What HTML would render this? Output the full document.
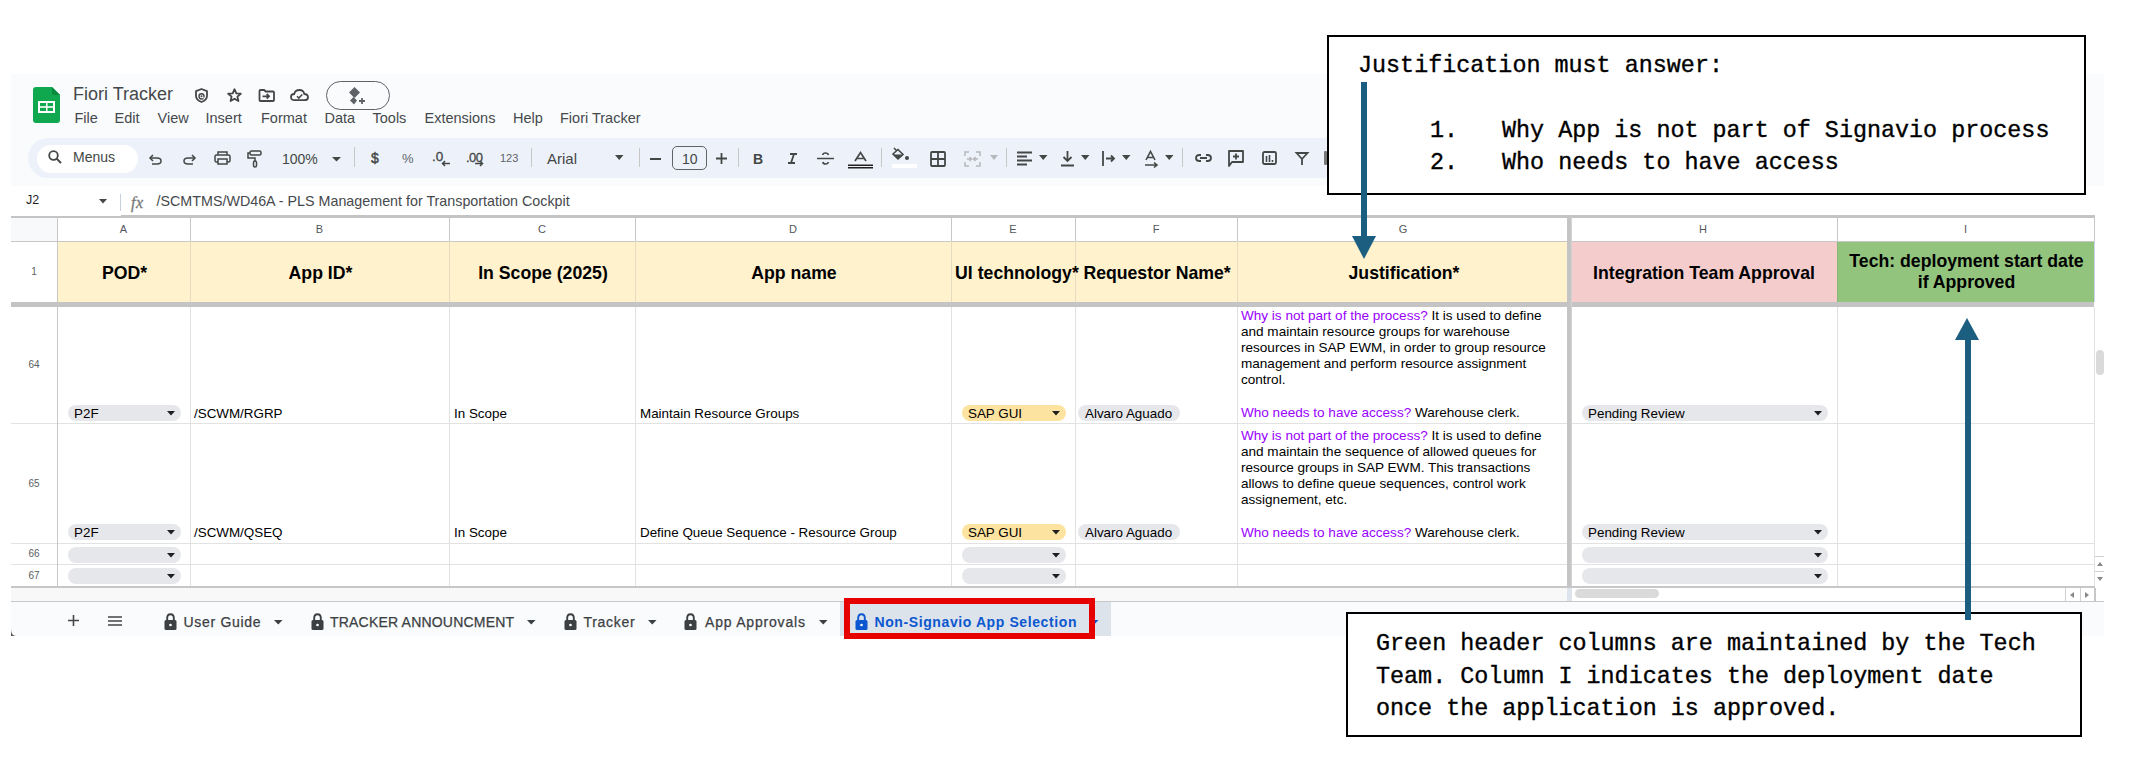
<!DOCTYPE html><html><head><meta charset="utf-8"><style>
*{margin:0;padding:0;box-sizing:border-box}
html,body{width:2143px;height:778px;overflow:hidden;background:#fff;font-family:"Liberation Sans",sans-serif;color:#1f1f1f}
.a{position:absolute}
.t{position:absolute;white-space:nowrap;line-height:1}
.mono{position:absolute;white-space:pre;font-family:"Liberation Mono",monospace;color:#000;line-height:1;-webkit-text-stroke:0.35px #000}
svg{position:absolute;overflow:visible}
</style></head><body>
<div class="a" style="left:11px;top:74px;width:2093px;height:112px;background:#f9fbfd;"></div>
<svg style="left:33px;top:87px" width="27" height="36" viewBox="0 0 27 36"><path d="M0 3Q0 0 3 0H19L27 8V33Q27 36 24 36H3Q0 36 0 33Z" fill="#0fa84e"/><path d="M19 0L27 8H21Q19 8 19 6Z" fill="#078a3e"/><rect x="5" y="14" width="17" height="12" fill="#fff"/><rect x="7" y="16" width="6" height="3.2" fill="#0fa84e"/><rect x="14.5" y="16" width="5.5" height="3.2" fill="#0fa84e"/><rect x="7" y="20.8" width="6" height="3.2" fill="#0fa84e"/><rect x="14.5" y="20.8" width="5.5" height="3.2" fill="#0fa84e"/></svg>
<div class="t" style="left:73px;top:84.7px;font-size:18px;color:#45484b;">Fiori Tracker</div>
<svg style="left:195px;top:88px" width="13" height="15" viewBox="0 0 13 15"><path d="M6.5 1L12 3.2V8Q12 12 6.5 14Q1 12 1 8V3.2Z" fill="none" stroke="#444746" stroke-width="1.8" stroke-linejoin="round"/><path d="M8.6 10.5Q8 11 6.5 11Q4 11 4 8.3Q4 5.8 6.5 5.8Q9 5.8 9 8.3V9.5" fill="none" stroke="#444746" stroke-width="1.4"/><circle cx="6.5" cy="8.3" r="1" fill="#444746"/></svg>
<svg style="left:227px;top:88px" width="15" height="14" viewBox="0 0 15 14"><path d="M7.5 1.2L9.3 5.3L13.8 5.7L10.4 8.6L11.4 13L7.5 10.7L3.6 13L4.6 8.6L1.2 5.7L5.7 5.3Z" fill="none" stroke="#444746" stroke-width="1.8" stroke-linejoin="round"/></svg>
<svg style="left:258px;top:89px" width="17" height="13" viewBox="0 0 17 13"><path d="M1.5 2Q1.5 1 2.5 1H6.2L7.7 2.5H15Q16 2.5 16 3.5V11Q16 12 15 12H2.5Q1.5 12 1.5 11Z" fill="none" stroke="#444746" stroke-width="1.8" stroke-linejoin="round"/><path d="M4.5 7.3H11M8.7 5L11 7.3L8.7 9.6" fill="none" stroke="#444746" stroke-width="1.8"/></svg>
<svg style="left:290px;top:89px" width="19" height="12" viewBox="0 0 19 12"><path d="M4.5 11.2Q1 11.2 1 8Q1 5 4.2 5Q5 1 9.5 1Q13.5 1 14.3 5Q18 5.2 18 8.2Q18 11.2 14.5 11.2Z" fill="none" stroke="#444746" stroke-width="1.8"/><path d="M7 7.2L8.8 9L12.3 5.5" fill="none" stroke="#444746" stroke-width="1.6"/></svg>
<div class="a" style="left:326px;top:81px;width:64px;height:29px;background:transparent;border:1.6px solid #5f6368;border-radius:15px"></div>
<svg style="left:349px;top:87px" width="18" height="18" viewBox="0 0 18 18"><path d="M5.5 0L11 5.5L5.5 11L0 5.5Z" fill="#5f6368"/><path d="M4.5 10L8 13.5L5 17.5L1 13.5Z" fill="#5f6368"/><path d="M13 11V17M10 14H16" stroke="#5f6368" stroke-width="1.8"/></svg>
<div class="t" style="left:74.5px;top:111px;font-size:14.5px;color:#46494c;">File</div>
<div class="t" style="left:114.5px;top:111px;font-size:14.5px;color:#46494c;">Edit</div>
<div class="t" style="left:157.5px;top:111px;font-size:14.5px;color:#46494c;">View</div>
<div class="t" style="left:205.5px;top:111px;font-size:14.5px;color:#46494c;">Insert</div>
<div class="t" style="left:261px;top:111px;font-size:14.5px;color:#46494c;">Format</div>
<div class="t" style="left:324.5px;top:111px;font-size:14.5px;color:#46494c;">Data</div>
<div class="t" style="left:372.5px;top:111px;font-size:14.5px;color:#46494c;">Tools</div>
<div class="t" style="left:424.5px;top:111px;font-size:14.5px;color:#46494c;">Extensions</div>
<div class="t" style="left:513px;top:111px;font-size:14.5px;color:#46494c;">Help</div>
<div class="t" style="left:560px;top:111px;font-size:14.5px;color:#46494c;">Fiori Tracker</div>
<div class="a" style="left:28px;top:138px;width:1400px;height:40px;background:#edf2fa;border-radius:20px"></div>
<div class="a" style="left:37px;top:145px;width:101px;height:28px;background:#fff;border-radius:14px"></div>
<svg style="left:48px;top:150px" width="14" height="15" viewBox="0 0 14 15"><circle cx="5.5" cy="5.5" r="4.3" fill="none" stroke="#444746" stroke-width="1.8"/><path d="M8.6 8.6L13 13" stroke="#444746" stroke-width="2"/></svg>
<div class="t" style="left:73px;top:150px;font-size:14px;color:#444746;">Menus</div>
<svg style="left:149px;top:154px" width="13" height="11" viewBox="0 0 13 11"><path d="M4 1L1 4L4 7" fill="none" stroke="#444746" stroke-width="1.5"/><path d="M1.5 4H8Q12 4 12 7Q12 10 8 10H3" fill="none" stroke="#444746" stroke-width="1.5"/></svg>
<svg style="left:183px;top:154px" width="13" height="11" viewBox="0 0 13 11"><path d="M9 1L12 4L9 7" fill="none" stroke="#444746" stroke-width="1.5"/><path d="M11.5 4H5Q1 4 1 7Q1 10 5 10H10" fill="none" stroke="#444746" stroke-width="1.5"/></svg>
<svg style="left:214px;top:151px" width="17" height="14" viewBox="0 0 17 14"><path d="M4 4V1H13V4" fill="none" stroke="#444746" stroke-width="1.5"/><rect x="1" y="4" width="15" height="7" rx="1.5" fill="none" stroke="#444746" stroke-width="1.5"/><rect x="4" y="8" width="9" height="5" fill="#edf2fa" stroke="#444746" stroke-width="1.5"/></svg>
<svg style="left:247px;top:150px" width="15" height="18" viewBox="0 0 15 18"><rect x="3" y="1" width="11" height="4" rx="1.5" fill="none" stroke="#444746" stroke-width="1.5"/><path d="M3 3H1V8H8V11" fill="none" stroke="#444746" stroke-width="1.5"/><rect x="6.5" y="11" width="3" height="6" rx="1.5" fill="none" stroke="#444746" stroke-width="1.5"/></svg>
<div class="t" style="left:282px;top:151.5px;font-size:14px;color:#444746;">100%</div>
<svg style="left:332px;top:157px" width="9" height="4.5" viewBox="0 0 9 4.5"><path d="M0 0H9L4.5 4.5Z" fill="#444746"/></svg>
<div class="a" style="left:354px;top:147px;width:1px;height:20px;background:#c7c7c7;"></div>
<div class="t" style="left:371px;top:150.5px;font-size:14px;color:#444746;-webkit-text-stroke:0.4px #444746">$</div>
<div class="t" style="left:402px;top:151.5px;font-size:13px;color:#5f6368;">%</div>
<div class="t" style="left:432px;top:150px;font-size:13.5px;color:#444746;-webkit-text-stroke:0.3px #444746">.0</div>
<svg style="left:441px;top:161px" width="9" height="5" viewBox="0 0 9 5"><path d="M9 2.5H2M4 0L1.5 2.5L4 5" fill="none" stroke="#444746" stroke-width="1.5"/></svg>
<div class="t" style="left:466px;top:150.5px;font-size:13px;color:#444746;-webkit-text-stroke:0.3px #444746;letter-spacing:-0.6px">.00</div>
<svg style="left:475px;top:161px" width="9" height="5" viewBox="0 0 9 5"><path d="M0 2.5H7M5 0L7.5 2.5L5 5" fill="none" stroke="#444746" stroke-width="1.5"/></svg>
<div class="t" style="left:500px;top:153px;font-size:11px;color:#5f6368;">123</div>
<div class="a" style="left:531px;top:148px;width:1px;height:19px;background:#c7c7c7;"></div>
<div class="t" style="left:547px;top:151px;font-size:15px;color:#444746;">Arial</div>
<svg style="left:615px;top:155px" width="8.5" height="5" viewBox="0 0 8.5 5"><path d="M0 0H8.5L4.25 5Z" fill="#444746"/></svg>
<div class="a" style="left:639px;top:148px;width:1px;height:19px;background:#c7c7c7;"></div>
<div class="a" style="left:650px;top:158px;width:11px;height:2px;background:#444746;"></div>
<div class="a" style="left:672px;top:146px;width:35px;height:24px;background:transparent;border:1.5px solid #5f6368;border-radius:5px"></div>
<div class="t" style="left:682px;top:151.5px;font-size:14px;color:#444746;">10</div>
<svg style="left:716px;top:153px" width="11" height="11" viewBox="0 0 11 11"><path d="M5.5 0V11M0 5.5H11" stroke="#444746" stroke-width="1.8"/></svg>
<div class="a" style="left:738px;top:148px;width:1px;height:19px;background:#c7c7c7;"></div>
<div class="t" style="left:753px;top:151.5px;font-size:14px;color:#444746;font-weight:bold">B</div>
<svg style="left:787px;top:153px" width="11" height="11" viewBox="0 0 11 11"><path d="M3 1H10M1 10H8M7 1L4 10" stroke="#444746" stroke-width="1.8" fill="none"/></svg>
<svg style="left:817px;top:152px" width="17" height="13" viewBox="0 0 17 13"><path d="M0 6.5H17" stroke="#444746" stroke-width="1.5"/><path d="M11.5 3Q11 1 8.5 1Q6 1 5.8 3M5.8 10Q6.2 12 8.5 12Q11 12 11.3 10" fill="none" stroke="#444746" stroke-width="1.6"/></svg>
<svg style="left:848px;top:152px" width="25" height="17" viewBox="0 0 25 17"><path d="M7 9L12.5 0.5L18 9M8.7 6.5H16.3" fill="none" stroke="#444746" stroke-width="1.7"/><rect x="0" y="12.5" width="25" height="4" fill="#1f1f1f"/><rect x="0" y="14" width="25" height="1" fill="#edf2fa"/></svg>
<div class="a" style="left:881px;top:148px;width:1px;height:19px;background:#c7c7c7;"></div>
<svg style="left:891px;top:147px" width="19" height="14" viewBox="0 0 19 14"><path d="M3 1L6 4M2 7L7 2.5L12 7.5L7 12L2 7Z" fill="none" stroke="#444746" stroke-width="1.6"/><path d="M2 7.5H12L7 12Z" fill="#444746"/><circle cx="16" cy="11" r="2" fill="#444746"/></svg>
<div class="a" style="left:892px;top:164px;width:25px;height:4px;background:#fff;"></div>
<svg style="left:930px;top:151px" width="16" height="16" viewBox="0 0 16 16"><rect x="1" y="1" width="14" height="14" rx="1" fill="none" stroke="#444746" stroke-width="1.8"/><path d="M8 1V15M1 8H15" stroke="#444746" stroke-width="1.8"/></svg>
<svg style="left:964px;top:151px" width="17" height="16" viewBox="0 0 17 16"><path d="M1 5V1H5M1 11V15H5M16 5V1H12M16 11V15H12M3 8H7M5.5 6L7.5 8L5.5 10M14 8H10M11.5 6L9.5 8L11.5 10" fill="none" stroke="#b6b8bb" stroke-width="1.5"/></svg>
<svg style="left:990px;top:155px" width="8" height="5" viewBox="0 0 8 5"><path d="M0 0H8L4.0 5Z" fill="#b6b8bb"/></svg>
<div class="a" style="left:1006px;top:148px;width:1px;height:19px;background:#c7c7c7;"></div>
<svg style="left:1017px;top:151px" width="15" height="15" viewBox="0 0 15 15"><path d="M0 1.5H15M0 5.5H10M0 9.5H15M0 13.5H10" stroke="#444746" stroke-width="2"/></svg>
<svg style="left:1039px;top:155px" width="8.5" height="5" viewBox="0 0 8.5 5"><path d="M0 0H8.5L4.25 5Z" fill="#444746"/></svg>
<svg style="left:1061px;top:151px" width="13" height="16" viewBox="0 0 13 16"><path d="M6.5 0V10M2.5 6L6.5 10L10.5 6M0 14.5H13" fill="none" stroke="#444746" stroke-width="1.8"/></svg>
<svg style="left:1081px;top:155px" width="8.5" height="5" viewBox="0 0 8.5 5"><path d="M0 0H8.5L4.25 5Z" fill="#444746"/></svg>
<svg style="left:1102px;top:151px" width="13" height="15" viewBox="0 0 13 15"><path d="M1 0V15M4 7.5H12M9 4.5L12 7.5L9 10.5" fill="none" stroke="#444746" stroke-width="1.8"/></svg>
<svg style="left:1122px;top:155px" width="8.5" height="5" viewBox="0 0 8.5 5"><path d="M0 0H8.5L4.25 5Z" fill="#444746"/></svg>
<svg style="left:1145px;top:151px" width="13" height="16" viewBox="0 0 13 16"><path d="M1 9L5.5 0.5L10 9M2.5 6.5H8.5M0 14H11M9 11.5L12 14L9 16.5" fill="none" stroke="#444746" stroke-width="1.6"/></svg>
<svg style="left:1165px;top:155px" width="8.5" height="5" viewBox="0 0 8.5 5"><path d="M0 0H8.5L4.25 5Z" fill="#444746"/></svg>
<div class="a" style="left:1182px;top:148px;width:1px;height:19px;background:#c7c7c7;"></div>
<svg style="left:1195px;top:154px" width="17" height="8" viewBox="0 0 17 8"><path d="M6 1H4.5Q1 1 1 4Q1 7 4.5 7H6M11 1H12.5Q16 1 16 4Q16 7 12.5 7H11M5 4H12" fill="none" stroke="#444746" stroke-width="1.8"/></svg>
<svg style="left:1228px;top:150px" width="16" height="17" viewBox="0 0 16 17"><path d="M1 1H15V12H4L1 16Z" fill="none" stroke="#444746" stroke-width="1.8" stroke-linejoin="round"/><path d="M8 3.5V9.5M5 6.5H11" stroke="#444746" stroke-width="1.8"/></svg>
<svg style="left:1262px;top:151px" width="15" height="14" viewBox="0 0 15 14"><rect x="1" y="1" width="13" height="12" rx="1.5" fill="none" stroke="#444746" stroke-width="1.8"/><path d="M4.5 5V11M7.5 4V11M10.5 9V11" stroke="#444746" stroke-width="1.6"/></svg>
<svg style="left:1296px;top:152px" width="12" height="13" viewBox="0 0 12 13"><path d="M0.5 1H11.5L6 7L0.5 1ZM6 7V13" fill="none" stroke="#444746" stroke-width="1.8"/></svg>
<div class="a" style="left:1324px;top:151px;width:3px;height:14px;background:#777;border-radius:1px"></div>
<div class="a" style="left:11px;top:186px;width:2093px;height:31px;background:#fff;"></div>
<div class="t" style="left:26px;top:193.5px;font-size:12.5px;color:#1f1f1f;">J2</div>
<svg style="left:99px;top:199px" width="8" height="4.5" viewBox="0 0 8 4.5"><path d="M0 0H8L4.0 4.5Z" fill="#444746"/></svg>
<div class="a" style="left:120px;top:194px;width:1px;height:17px;background:#c7d0dc;"></div>
<div class="t" style="left:131px;top:194.5px;font-size:16px;color:#777;font-family:'Liberation Serif',serif;-webkit-text-stroke:0.3px #777;letter-spacing:0.5px"><i>fx</i></div>
<div class="t" style="left:156.5px;top:193.5px;font-size:14.3px;color:#46494c;">/SCMTMS/WD46A - PLS Management for Transportation Cockpit</div>
<div class="a" style="left:11px;top:217px;width:2093px;height:24px;background:#fff;"></div>
<div class="a" style="left:11px;top:217px;width:46px;height:24px;background:#f8f9fa;"></div>
<div class="a" style="left:58px;top:241px;width:132px;height:61px;background:#fff2cc;"></div>
<div class="a" style="left:191px;top:241px;width:258px;height:61px;background:#fff2cc;"></div>
<div class="a" style="left:450px;top:241px;width:185px;height:61px;background:#fff2cc;"></div>
<div class="a" style="left:636px;top:241px;width:315px;height:61px;background:#fff2cc;"></div>
<div class="a" style="left:952px;top:241px;width:123px;height:61px;background:#fff2cc;"></div>
<div class="a" style="left:1076px;top:241px;width:161px;height:61px;background:#fff2cc;"></div>
<div class="a" style="left:1238px;top:241px;width:331px;height:61px;background:#fff2cc;"></div>
<div class="a" style="left:1570px;top:241px;width:267px;height:61px;background:#f4cccc;"></div>
<div class="a" style="left:1838px;top:241px;width:256px;height:61px;background:#93c47d;"></div>
<div class="a" style="left:11px;top:241px;width:46px;height:61px;background:#fff;"></div>
<div class="a" style="left:11px;top:307px;width:2093px;height:280px;background:#fff;"></div>
<div class="a" style="left:11px;top:215px;width:2084px;height:3px;background:#c4c4c4;"></div>
<div class="a" style="left:11px;top:215px;width:110px;height:1px;background:#fff;"></div>
<div class="a" style="left:11px;top:241px;width:2083px;height:1px;background:#c7c7c7;"></div>
<div class="a" style="left:190px;top:241px;width:1px;height:61px;background:#e6dcc0;"></div>
<div class="a" style="left:449px;top:241px;width:1px;height:61px;background:#e6dcc0;"></div>
<div class="a" style="left:635px;top:241px;width:1px;height:61px;background:#e6dcc0;"></div>
<div class="a" style="left:951px;top:241px;width:1px;height:61px;background:#e6dcc0;"></div>
<div class="a" style="left:1075px;top:241px;width:1px;height:61px;background:#e6dcc0;"></div>
<div class="a" style="left:1237px;top:241px;width:1px;height:61px;background:#e6dcc0;"></div>
<div class="a" style="left:1837px;top:242px;width:257px;height:60px;background:#93c47d;"></div>
<div class="a" style="left:1837px;top:242px;width:1px;height:60px;background:#88b872;"></div>
<div class="a" style="left:2094px;top:217px;width:1px;height:85px;background:#c9d6ea;"></div>
<div class="a" style="left:11px;top:302px;width:2083px;height:5px;background:#c4c4c4;"></div>
<div class="a" style="left:11px;top:423px;width:2083px;height:1px;background:#e2e2e2;"></div>
<div class="a" style="left:11px;top:543px;width:2083px;height:1px;background:#e2e2e2;"></div>
<div class="a" style="left:11px;top:564px;width:2083px;height:1px;background:#e2e2e2;"></div>
<div class="a" style="left:11px;top:587px;width:2083px;height:1px;background:#e2e2e2;"></div>
<div class="a" style="left:57px;top:217px;width:1px;height:24px;background:#c7c7c7;"></div>
<div class="a" style="left:190px;top:217px;width:1px;height:24px;background:#c7c7c7;"></div>
<div class="a" style="left:449px;top:217px;width:1px;height:24px;background:#c7c7c7;"></div>
<div class="a" style="left:635px;top:217px;width:1px;height:24px;background:#c7c7c7;"></div>
<div class="a" style="left:951px;top:217px;width:1px;height:24px;background:#c7c7c7;"></div>
<div class="a" style="left:1075px;top:217px;width:1px;height:24px;background:#c7c7c7;"></div>
<div class="a" style="left:1237px;top:217px;width:1px;height:24px;background:#c7c7c7;"></div>
<div class="a" style="left:1569px;top:217px;width:1px;height:24px;background:#c7c7c7;"></div>
<div class="a" style="left:1837px;top:217px;width:1px;height:24px;background:#c7c7c7;"></div>
<div class="a" style="left:2094px;top:217px;width:1px;height:24px;background:#c7c7c7;"></div>
<div class="a" style="left:57px;top:307px;width:1px;height:280px;background:#c7c7c7;"></div>
<div class="a" style="left:190px;top:307px;width:1px;height:280px;background:#e2e2e2;"></div>
<div class="a" style="left:449px;top:307px;width:1px;height:280px;background:#e2e2e2;"></div>
<div class="a" style="left:635px;top:307px;width:1px;height:280px;background:#e2e2e2;"></div>
<div class="a" style="left:951px;top:307px;width:1px;height:280px;background:#e2e2e2;"></div>
<div class="a" style="left:1075px;top:307px;width:1px;height:280px;background:#e2e2e2;"></div>
<div class="a" style="left:1237px;top:307px;width:1px;height:280px;background:#e2e2e2;"></div>
<div class="a" style="left:1569px;top:307px;width:1px;height:280px;background:#e2e2e2;"></div>
<div class="a" style="left:1837px;top:307px;width:1px;height:280px;background:#e2e2e2;"></div>
<div class="a" style="left:2094px;top:307px;width:1px;height:280px;background:#e2e2e2;"></div>
<div class="a" style="left:1567px;top:217px;width:4px;height:370px;background:#c4c4c4;"></div>
<div class="a" style="left:1571px;top:217px;width:1px;height:370px;background:#d4d4d4;"></div>
<div class="a" style="left:57px;top:241px;width:1px;height:61px;background:#c7c7c7;"></div>
<div class="a" style="left:11px;top:586px;width:2085px;height:2px;background:#c7c7c7;"></div>
<div class="t" style="left:103.5px;top:224px;width:40px;text-align:center;font-size:11px;color:#54575a">A</div>
<div class="t" style="left:299.5px;top:224px;width:40px;text-align:center;font-size:11px;color:#54575a">B</div>
<div class="t" style="left:522.0px;top:224px;width:40px;text-align:center;font-size:11px;color:#54575a">C</div>
<div class="t" style="left:773.0px;top:224px;width:40px;text-align:center;font-size:11px;color:#54575a">D</div>
<div class="t" style="left:993.0px;top:224px;width:40px;text-align:center;font-size:11px;color:#54575a">E</div>
<div class="t" style="left:1136.0px;top:224px;width:40px;text-align:center;font-size:11px;color:#54575a">F</div>
<div class="t" style="left:1383.0px;top:224px;width:40px;text-align:center;font-size:11px;color:#54575a">G</div>
<div class="t" style="left:1683.0px;top:224px;width:40px;text-align:center;font-size:11px;color:#54575a">H</div>
<div class="t" style="left:1945.5px;top:224px;width:40px;text-align:center;font-size:11px;color:#54575a">I</div>
<div class="t" style="left:11px;top:266.5px;width:46px;text-align:center;font-size:10px;color:#5a5d60">1</div>
<div class="t" style="left:11px;top:360.0px;width:46px;text-align:center;font-size:10px;color:#5a5d60">64</div>
<div class="t" style="left:11px;top:478.5px;width:46px;text-align:center;font-size:10px;color:#5a5d60">65</div>
<div class="t" style="left:11px;top:549.0px;width:46px;text-align:center;font-size:10px;color:#5a5d60">66</div>
<div class="t" style="left:11px;top:571.0px;width:46px;text-align:center;font-size:10px;color:#5a5d60">67</div>
<div class="a" style="left:2095px;top:217px;width:9px;height:371px;background:#fff;"></div>
<div class="a" style="left:2096px;top:350px;width:8px;height:25px;background:#dadada;border-radius:4px"></div>
<div class="a" style="left:2095px;top:556px;width:9px;height:1px;background:#d0d0d0;"></div>
<div class="a" style="left:2095px;top:571px;width:9px;height:1px;background:#d0d0d0;"></div>
<svg style="left:2097px;top:562px" width="6" height="4" viewBox="0 0 6 4"><path d="M0 4H6L3 0Z" fill="#888"/></svg>
<svg style="left:2097px;top:577px" width="6" height="4" viewBox="0 0 6 4"><path d="M0 0H6L3 4Z" fill="#888"/></svg>
<div class="t" style="left:58px;top:264px;width:133px;text-align:center;font-size:18.6px;font-weight:bold;color:#000;transform:scaleX(0.95)">POD*</div>
<div class="t" style="left:191px;top:264px;width:259px;text-align:center;font-size:18.6px;font-weight:bold;color:#000;transform:scaleX(0.95)">App ID*</div>
<div class="t" style="left:450px;top:264px;width:186px;text-align:center;font-size:18.6px;font-weight:bold;color:#000;transform:scaleX(0.95)">In Scope (2025)</div>
<div class="t" style="left:636px;top:264px;width:316px;text-align:center;font-size:18.6px;font-weight:bold;color:#000;transform:scaleX(0.95)">App name</div>
<div class="t" style="left:952px;top:264px;width:124px;text-align:center;font-size:18.6px;font-weight:bold;color:#000;transform:scaleX(0.95)">UI technology*</div>
<div class="t" style="left:1076px;top:264px;width:162px;text-align:center;font-size:18.6px;font-weight:bold;color:#000;transform:scaleX(0.95)">Requestor Name*</div>
<div class="t" style="left:1238px;top:264px;width:332px;text-align:center;font-size:18.6px;font-weight:bold;color:#000;transform:scaleX(0.95)">Justification*</div>
<div class="t" style="left:1570px;top:264px;width:268px;text-align:center;font-size:18.6px;font-weight:bold;color:#000;transform:scaleX(0.95)">Integration Team Approval</div>
<div class="t" style="left:1838px;top:250px;width:257px;text-align:center;font-size:18.6px;font-weight:bold;color:#000;line-height:21.3px;transform:scaleX(0.95)">Tech: deployment start date<br>if Approved</div>
<div class="a" style="left:68px;top:405px;width:113px;height:16px;background:#e6e7eb;border-radius:8px"></div>
<svg style="left:167px;top:411px" width="8" height="4.5" viewBox="0 0 8 4.5"><path d="M0 0H8L4.0 4.5Z" fill="#1f1f1f"/></svg>
<div class="t" style="left:74px;top:407px;font-size:13.4px;color:#000;">P2F</div>
<div class="t" style="left:194px;top:407px;font-size:13.4px;color:#000;">/SCWM/RGRP</div>
<div class="t" style="left:454px;top:407px;font-size:13.4px;color:#000;">In Scope</div>
<div class="t" style="left:640px;top:407px;font-size:13.4px;color:#000;">Maintain Resource Groups</div>
<div class="a" style="left:962px;top:405px;width:104px;height:16px;background:#fde3a0;border-radius:8px"></div>
<svg style="left:1052px;top:411px" width="8" height="4.5" viewBox="0 0 8 4.5"><path d="M0 0H8L4.0 4.5Z" fill="#1f1f1f"/></svg>
<div class="t" style="left:968px;top:407px;font-size:13.4px;color:#000;">SAP GUI</div>
<div class="a" style="left:1078px;top:405px;width:102px;height:16px;background:#e6e7eb;border-radius:8px"></div>
<div class="t" style="left:1085px;top:407px;font-size:13.4px;color:#000;">Alvaro Aguado</div>
<div class="a" style="left:1582px;top:405px;width:246px;height:16px;background:#e6e7eb;border-radius:8px"></div>
<svg style="left:1814px;top:411px" width="8" height="4.5" viewBox="0 0 8 4.5"><path d="M0 0H8L4.0 4.5Z" fill="#1f1f1f"/></svg>
<div class="t" style="left:1588px;top:407px;font-size:13.4px;color:#000;">Pending Review</div>
<div class="a" style="left:68px;top:524px;width:113px;height:16px;background:#e6e7eb;border-radius:8px"></div>
<svg style="left:167px;top:530px" width="8" height="4.5" viewBox="0 0 8 4.5"><path d="M0 0H8L4.0 4.5Z" fill="#1f1f1f"/></svg>
<div class="t" style="left:74px;top:526px;font-size:13.4px;color:#000;">P2F</div>
<div class="t" style="left:194px;top:526px;font-size:13.4px;color:#000;">/SCWM/QSEQ</div>
<div class="t" style="left:454px;top:526px;font-size:13.4px;color:#000;">In Scope</div>
<div class="t" style="left:640px;top:526px;font-size:13.4px;color:#000;">Define Queue Sequence - Resource Group</div>
<div class="a" style="left:962px;top:524px;width:104px;height:16px;background:#fde3a0;border-radius:8px"></div>
<svg style="left:1052px;top:530px" width="8" height="4.5" viewBox="0 0 8 4.5"><path d="M0 0H8L4.0 4.5Z" fill="#1f1f1f"/></svg>
<div class="t" style="left:968px;top:526px;font-size:13.4px;color:#000;">SAP GUI</div>
<div class="a" style="left:1078px;top:524px;width:102px;height:16px;background:#e6e7eb;border-radius:8px"></div>
<div class="t" style="left:1085px;top:526px;font-size:13.4px;color:#000;">Alvaro Aguado</div>
<div class="a" style="left:1582px;top:524px;width:246px;height:16px;background:#e6e7eb;border-radius:8px"></div>
<svg style="left:1814px;top:530px" width="8" height="4.5" viewBox="0 0 8 4.5"><path d="M0 0H8L4.0 4.5Z" fill="#1f1f1f"/></svg>
<div class="t" style="left:1588px;top:526px;font-size:13.4px;color:#000;">Pending Review</div>
<div class="a" style="left:68px;top:547px;width:113px;height:16px;background:#e6e7eb;border-radius:8px"></div>
<svg style="left:167px;top:553px" width="8" height="4.5" viewBox="0 0 8 4.5"><path d="M0 0H8L4.0 4.5Z" fill="#1f1f1f"/></svg>
<div class="a" style="left:962px;top:547px;width:104px;height:16px;background:#e6e7eb;border-radius:8px"></div>
<svg style="left:1052px;top:553px" width="8" height="4.5" viewBox="0 0 8 4.5"><path d="M0 0H8L4.0 4.5Z" fill="#1f1f1f"/></svg>
<div class="a" style="left:1582px;top:547px;width:246px;height:16px;background:#e6e7eb;border-radius:8px"></div>
<svg style="left:1814px;top:553px" width="8" height="4.5" viewBox="0 0 8 4.5"><path d="M0 0H8L4.0 4.5Z" fill="#1f1f1f"/></svg>
<div class="a" style="left:68px;top:568px;width:113px;height:16px;background:#e6e7eb;border-radius:8px"></div>
<svg style="left:167px;top:574px" width="8" height="4.5" viewBox="0 0 8 4.5"><path d="M0 0H8L4.0 4.5Z" fill="#1f1f1f"/></svg>
<div class="a" style="left:962px;top:568px;width:104px;height:16px;background:#e6e7eb;border-radius:8px"></div>
<svg style="left:1052px;top:574px" width="8" height="4.5" viewBox="0 0 8 4.5"><path d="M0 0H8L4.0 4.5Z" fill="#1f1f1f"/></svg>
<div class="a" style="left:1582px;top:568px;width:246px;height:16px;background:#e6e7eb;border-radius:8px"></div>
<svg style="left:1814px;top:574px" width="8" height="4.5" viewBox="0 0 8 4.5"><path d="M0 0H8L4.0 4.5Z" fill="#1f1f1f"/></svg>
<div class="t" style="left:1241px;top:307.5px;font-size:13.56px;line-height:16.2px;color:#000"><span style="color:#9900ff">Why is not part of the process?</span> It is used to define<br>and maintain resource groups for warehouse<br>resources in SAP EWM, in order to group resource<br>management and perform resource assignment<br>control.<br><br><span style="color:#9900ff">Who needs to have access?</span> Warehouse clerk.</div>
<div class="t" style="left:1241px;top:427.5px;font-size:13.56px;line-height:16.2px;color:#000"><span style="color:#9900ff">Why is not part of the process?</span> It is used to define<br>and maintain the sequence of allowed queues for<br>resource groups in SAP EWM. This transactions<br>allows to define queue sequences, control work<br>assignement, etc.<br><br><span style="color:#9900ff">Who needs to have access?</span> Warehouse clerk.</div>
<div class="a" style="left:11px;top:588px;width:2093px;height:13px;background:#fff;"></div>
<div class="a" style="left:11px;top:588px;width:1556px;height:13px;background:#f8f8f8;"></div>
<div class="a" style="left:1567px;top:588px;width:5px;height:13px;background:#dde4ee;"></div>
<div class="a" style="left:1575px;top:589px;width:84px;height:9px;background:#dadada;border-radius:5px"></div>
<div class="a" style="left:2065px;top:588px;width:1px;height:13px;background:#d0d0d0;"></div>
<div class="a" style="left:2080px;top:588px;width:1px;height:13px;background:#d0d0d0;"></div>
<div class="a" style="left:2094px;top:588px;width:2px;height:13px;background:#c7c7c7;"></div>
<svg style="left:2070px;top:592px" width="4" height="6" viewBox="0 0 4 6"><path d="M4 0V6L0 3Z" fill="#888"/></svg>
<svg style="left:2085px;top:592px" width="4" height="6" viewBox="0 0 4 6"><path d="M0 0V6L4 3Z" fill="#888"/></svg>
<div class="a" style="left:11px;top:601px;width:2093px;height:35px;background:#f9fbfd;"></div>
<div class="a" style="left:11px;top:601px;width:2093px;height:1px;background:#c7c7c7;"></div>
<svg style="left:68px;top:615px" width="11" height="11" viewBox="0 0 11 11"><path d="M5.5 0V11M0 5.5H11" stroke="#444746" stroke-width="1.6"/></svg>
<svg style="left:108px;top:616px" width="14" height="10" viewBox="0 0 14 10"><path d="M0 1H14M0 5H14M0 9H14" stroke="#444746" stroke-width="1.6"/></svg>
<svg style="left:164px;top:613px" width="13" height="17" viewBox="0 0 13 17"><path d="M3.2 7V5Q3.2 1.2 6.5 1.2Q9.8 1.2 9.8 5V7" fill="none" stroke="#3c4043" stroke-width="1.9"/><rect x="0.5" y="7" width="12" height="10" rx="1.5" fill="#3c4043"/><circle cx="6.5" cy="12" r="1.3" fill="#fff"/></svg>
<div class="t" style="left:183.5px;top:614.5px;font-size:14px;color:#3c4043;letter-spacing:0.7px;-webkit-text-stroke:0.25px #3c4043">User Guide</div>
<svg style="left:274px;top:620px" width="8.5" height="4.5" viewBox="0 0 8.5 4.5"><path d="M0 0H8.5L4.25 4.5Z" fill="#3c4043"/></svg>
<svg style="left:311px;top:613px" width="13" height="17" viewBox="0 0 13 17"><path d="M3.2 7V5Q3.2 1.2 6.5 1.2Q9.8 1.2 9.8 5V7" fill="none" stroke="#3c4043" stroke-width="1.9"/><rect x="0.5" y="7" width="12" height="10" rx="1.5" fill="#3c4043"/><circle cx="6.5" cy="12" r="1.3" fill="#fff"/></svg>
<div class="t" style="left:330px;top:614.5px;font-size:14px;color:#3c4043;letter-spacing:0.2px;-webkit-text-stroke:0.25px #3c4043">TRACKER ANNOUNCMENT</div>
<svg style="left:527px;top:620px" width="8.5" height="4.5" viewBox="0 0 8.5 4.5"><path d="M0 0H8.5L4.25 4.5Z" fill="#3c4043"/></svg>
<svg style="left:564px;top:613px" width="13" height="17" viewBox="0 0 13 17"><path d="M3.2 7V5Q3.2 1.2 6.5 1.2Q9.8 1.2 9.8 5V7" fill="none" stroke="#3c4043" stroke-width="1.9"/><rect x="0.5" y="7" width="12" height="10" rx="1.5" fill="#3c4043"/><circle cx="6.5" cy="12" r="1.3" fill="#fff"/></svg>
<div class="t" style="left:583.5px;top:614.5px;font-size:14px;color:#3c4043;letter-spacing:0.7px;-webkit-text-stroke:0.25px #3c4043">Tracker</div>
<svg style="left:648px;top:620px" width="8.5" height="4.5" viewBox="0 0 8.5 4.5"><path d="M0 0H8.5L4.25 4.5Z" fill="#3c4043"/></svg>
<svg style="left:684px;top:613px" width="13" height="17" viewBox="0 0 13 17"><path d="M3.2 7V5Q3.2 1.2 6.5 1.2Q9.8 1.2 9.8 5V7" fill="none" stroke="#3c4043" stroke-width="1.9"/><rect x="0.5" y="7" width="12" height="10" rx="1.5" fill="#3c4043"/><circle cx="6.5" cy="12" r="1.3" fill="#fff"/></svg>
<div class="t" style="left:705px;top:614.5px;font-size:14px;color:#3c4043;letter-spacing:0.8px;-webkit-text-stroke:0.25px #3c4043">App Approvals</div>
<svg style="left:819px;top:620px" width="8.5" height="4.5" viewBox="0 0 8.5 4.5"><path d="M0 0H8.5L4.25 4.5Z" fill="#3c4043"/></svg>
<div class="a" style="left:840px;top:602px;width:271px;height:34px;background:#dde3ea;"></div>
<svg style="left:855px;top:613px" width="13" height="17" viewBox="0 0 13 17"><path d="M3.2 7V5Q3.2 1.2 6.5 1.2Q9.8 1.2 9.8 5V7" fill="none" stroke="#0b57d0" stroke-width="1.9"/><rect x="0.5" y="7" width="12" height="10" rx="1.5" fill="#0b57d0"/><circle cx="6.5" cy="12" r="1.3" fill="#fff"/></svg>
<div class="t" style="left:874.5px;top:614.5px;font-size:14px;color:#0b57d0;font-weight:bold;letter-spacing:0.6px">Non-Signavio App Selection</div>
<svg style="left:1090px;top:620px" width="8.5" height="4.5" viewBox="0 0 8.5 4.5"><path d="M0 0H8.5L4.25 4.5Z" fill="#0b57d0"/></svg>
<div class="a" style="left:844px;top:598px;width:251px;height:41px;background:transparent;border:6px solid #e60000"></div>
<svg style="left:11px;top:629px" width="5" height="7" viewBox="0 0 5 7"><path d="M0 0Q0 7 5 7H0Z" fill="#555"/></svg>
<div class="a" style="left:1327px;top:35px;width:759px;height:160px;background:#fff;border:2px solid #000"></div>
<div class="mono" style="left:1358px;top:55px;font-size:23.4px">Justification must answer:</div>
<div class="mono" style="left:1430px;top:120px;font-size:23.4px">1.</div>
<div class="mono" style="left:1430px;top:152px;font-size:23.4px">2.</div>
<div class="mono" style="left:1502px;top:120px;font-size:23.4px">Why App is not part of Signavio process</div>
<div class="mono" style="left:1502px;top:152px;font-size:23.4px">Who needs to have access</div>
<div class="a" style="left:1346px;top:612px;width:736px;height:125px;background:#fff;border:2px solid #000"></div>
<div class="mono" style="left:1376px;top:628px;font-size:23.4px;line-height:32.7px">Green header columns are maintained by the Tech
Team. Column I indicates the deployment date
once the application is approved.</div>
<div class="a" style="left:1361px;top:82px;width:6px;height:156px;background:#1b5e80;"></div>
<svg style="left:1352px;top:236px" width="24" height="24" viewBox="0 0 24 24"><path d="M0 0H24L12 23Z" fill="#1b5e80"/></svg>
<div class="a" style="left:1965px;top:338px;width:6px;height:282px;background:#1b5e80;"></div>
<svg style="left:1955px;top:318px" width="24" height="22" viewBox="0 0 24 22"><path d="M12 0L24 22H0Z" fill="#1b5e80"/></svg>
</body></html>
